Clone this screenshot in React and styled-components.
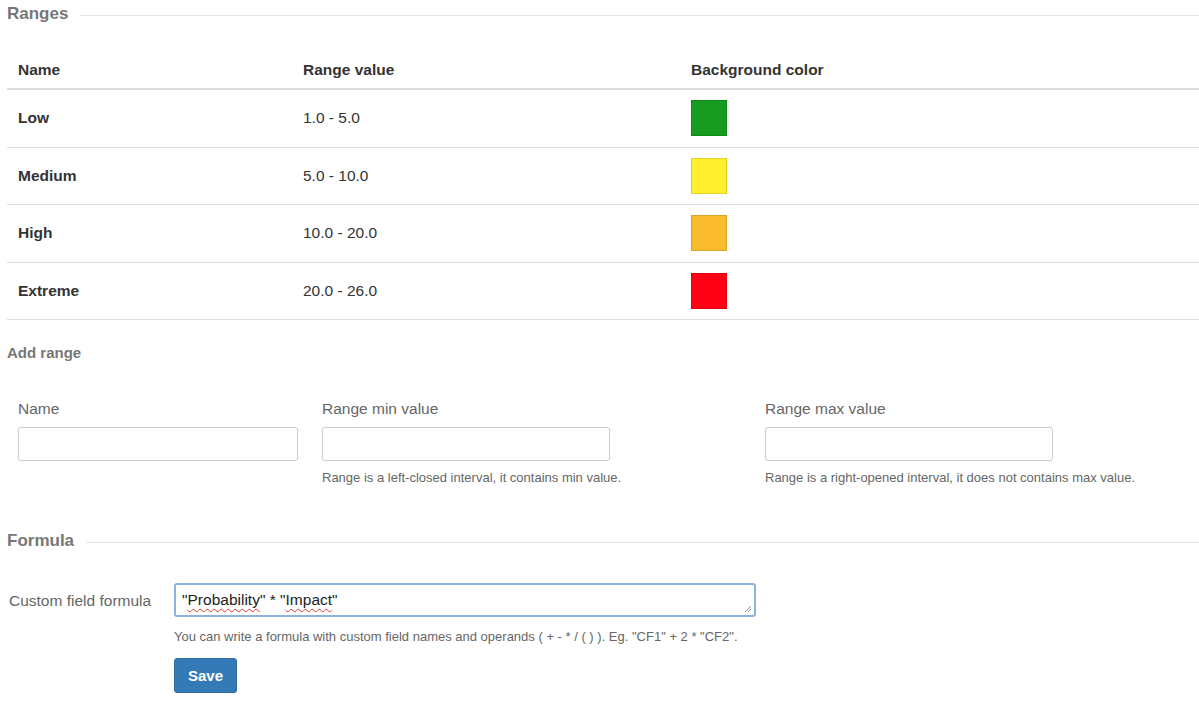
import React from "react";
import styled, { createGlobalStyle } from "styled-components";

const G = createGlobalStyle`
  body { margin: 0; font-family: "Liberation Sans", Arial, sans-serif; color: #333; background: #fff; }
`;
const Page = styled.div` padding: 0 0 0 7px; width: 1192px; `;
const Legend = styled.div`
  display: flex; align-items: center; gap: 12px; height: 28px; margin-top: ${p => p.$top || 0}px;
  font-size: 17px; font-weight: bold; color: #777;
  &::after { content: ""; flex: 1; border-top: 1px solid #e5e5e5; margin-top: 2px; }
`;
const Table = styled.div` margin-top: 24px; `;
const Row = styled.div`
  display: grid; grid-template-columns: 285px 388px 1fr; align-items: center;
  height: ${p => p.$h}px; border-bottom: 1px solid #ddd;
  border-bottom-width: ${p => p.$head ? 2 : 1}px; padding-left: 11px; font-size: 15.5px;
`;
const Cell = styled.div` font-weight: ${p => p.$b ? "bold" : "normal"}; `;
const Swatch = styled.div` width: 34px; height: 34px; background: ${p => p.$c}; border: 1px solid rgba(0,0,0,0.12); `;
const Sub = styled.div` font-size: 15px; font-weight: bold; color: #777; margin-top: 24px; `;
const Fields = styled.div` display: grid; grid-template-columns: 304px 443px 1fr; padding-left: 11px; margin-top: 39px; `;
const Label = styled.div` font-size: 15.5px; color: #666; margin-bottom: 9px; `;
const Input = styled.div`
  width: ${p => p.$w}px; height: 32px; border: 1px solid #ccc; border-radius: 3px; box-sizing: content-box;
`;
const Help = styled.div` font-size: 13px; color: #666; margin-top: ${p => p.$top || 9}px; `;
const FormRow = styled.div` display: flex; padding-left: 2px; margin-top: 28px; `;
const FLabel = styled.div` width: 165px; font-size: 15.5px; color: #666; padding-top: 9px; `;
const Area = styled.div`
  position: relative; width: 572px; height: 30px; border: 2px solid #8cb2e0; border-radius: 3px;
  font-size: 15.5px; color: #222; padding: 0 0 0 6px; display: flex; align-items: center;
  & u { text-decoration: underline wavy #d33; text-decoration-thickness: 1px; text-underline-offset: 3px; }
`;
const Grip = styled.svg` position: absolute; right: 2px; bottom: 2px; `;
const Save = styled.button`
  margin-top: 14px; background: #337ab7; color: #fff; border: 1px solid #2e6da4; border-radius: 3px;
  font: bold 15px "Liberation Sans", Arial, sans-serif; width: 63px; height: 35px;
`;

const rows = [["Low","1.0 - 5.0","#169b1f"],["Medium","5.0 - 10.0","#ffef2e"],["High","10.0 - 20.0","#fabb2c"],["Extreme","20.0 - 26.0","#ff0216"]];

export default function App() {
  return <Page><G/>
    <Legend>Ranges</Legend>
    <Table>
      <Row $head $h={36}><Cell $b>Name</Cell><Cell $b>Range value</Cell><Cell $b>Background color</Cell></Row>
      {rows.map(r => <Row key={r[0]} $h={56.5}><Cell $b>{r[0]}</Cell><Cell>{r[1]}</Cell><Swatch $c={r[2]}/></Row>)}
    </Table>
    <Sub>Add range</Sub>
    <Fields>
      <div><Label>Name</Label><Input $w={278}/></div>
      <div><Label>Range min value</Label><Input $w={286}/><Help>Range is a left-closed interval, it contains min value.</Help></div>
      <div><Label>Range max value</Label><Input $w={286}/><Help>Range is a right-opened interval, it does not contains max value.</Help></div>
    </Fields>
    <Legend $top={42}>Formula</Legend>
    <FormRow>
      <FLabel>Custom field formula</FLabel>
      <div>
        <Area>"<u>Probability</u>" * "<u>Impact</u>"
          <Grip width="8" height="8" viewBox="0 0 8 8"><path d="M7 1L1 7M7 4L4 7" stroke="#888" strokeWidth="1"/></Grip>
        </Area>
        <Help $top={12}>You can write a formula with custom field names and operands ( + - * / ( ) ). Eg. "CF1" + 2 * "CF2".</Help>
        <Save>Save</Save>
      </div>
    </FormRow>
  </Page>;
}
